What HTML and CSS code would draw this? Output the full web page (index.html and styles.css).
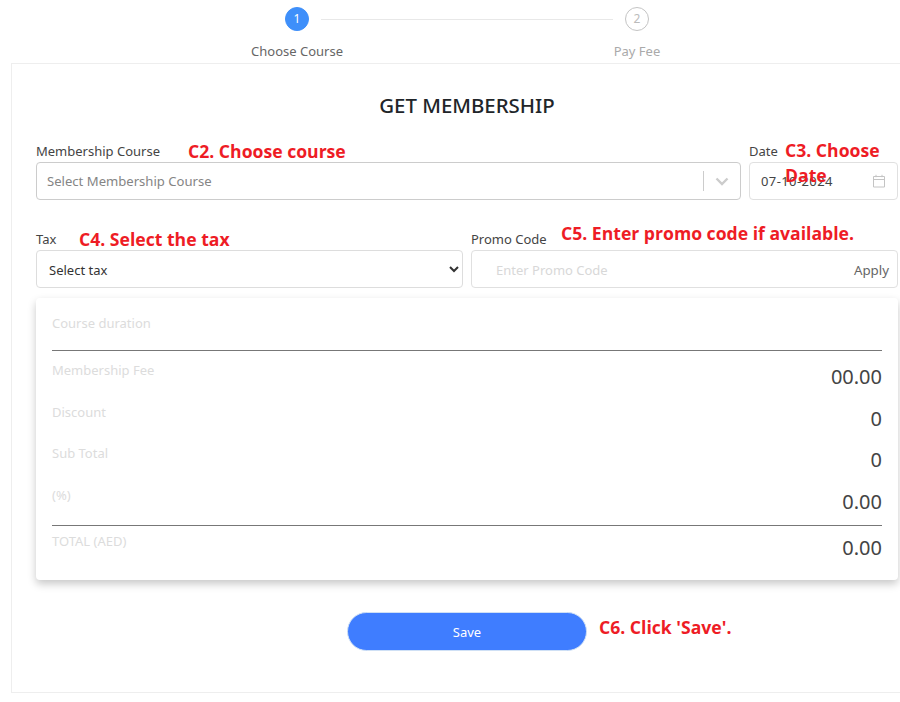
FILE: index.html
```html
<!DOCTYPE html>
<html lang="en">
<head>
<meta charset="utf-8">
<title>Get Membership</title>
<link rel="stylesheet" href="styles.css">
</head>
<body>
<div class="stepper">
  <div class="step">
    <span class="dot dot-active">1</span>
    <span class="step-label">Choose Course</span>
  </div>
  <div class="step-line"></div>
  <div class="step step-off">
    <span class="dot">2</span>
    <span class="step-label">Pay Fee</span>
  </div>
</div>
<main class="panel">
  <h1 class="title">GET MEMBERSHIP</h1>
  <div class="row row-first">
    <div class="field field-grow">
      <label class="label">Membership Course</label>
      <div class="box box-strong">
        <span class="placeholder">Select Membership Course</span>
        <span class="sep"></span>
        <svg class="chev" width="14" height="9" viewBox="0 0 14 9"><path d="M1.5 1.5 7 7l5.500-5.500" fill="none" stroke="#ccc" stroke-width="2.400"/></svg>
      </div>
    </div>
    <div class="field field-date">
      <label class="label">Date</label>
      <div class="box">
        <span class="date-val">07-10-2024</span>
        <svg class="cal" width="14" height="14" viewBox="0 0 14 14"><path d="M1.500 2.500h11v10.500h-11zM1.500 5.500h11M4 .8v2.400M10 .8v2.400" fill="none" stroke="#c4c4c4" stroke-width="1"/></svg>
      </div>
    </div>
  </div>
  <div class="row row-second">
    <div class="field field-half">
      <label class="label">Tax</label>
      <select class="select"><option>Select tax</option></select>
    </div>
    <div class="field field-half">
      <label class="label">Promo Code</label>
      <div class="box box-promo">
        <span class="promo">Enter Promo Code</span>
        <span class="apply">Apply</span>
      </div>
    </div>
  </div>
  <section class="summary">
    <div class="s-head">Course duration</div>
    <div class="s-row"><span class="s-label">Membership Fee</span><span class="s-val">00.00</span></div>
    <div class="s-row"><span class="s-label">Discount</span><span class="s-val">0</span></div>
    <div class="s-row"><span class="s-label">Sub Total</span><span class="s-val">0</span></div>
    <div class="s-row s-last"><span class="s-label">(%)</span><span class="s-val">0.00</span></div>
    <div class="s-row s-total"><span class="s-label">TOTAL (AED)</span><span class="s-val">0.00</span></div>
  </section>
  <div class="actions"><button class="save" type="button">Save</button></div>
  <span class="note n2">C2. Choose course</span>
  <span class="note n3">C3. Choose Date</span>
  <span class="note n4">C4. Select the tax</span>
  <span class="note n5">C5. Enter promo code if available.</span>
  <span class="note n6">C6. Click 'Save'.</span>
</main>
</body>
</html>
```
FILE: styles.css
```css
* { box-sizing: border-box; }
html, body { margin: 0; height: 702px; overflow: hidden; background: #fff; }
body { font-family: "Noto Sans", "Open Sans", sans-serif; color: #212529; font-size: 13px; }

.stepper { height: 63px; display: flex; align-items: flex-start; padding: 7px 0 0 227px; }
.step { width: 140px; display: flex; flex-direction: column; align-items: center; }
.dot { width: 24px; height: 24px; border-radius: 50%; border: 1px solid #c4c4c4; color: #bbb; font-size: 12px; line-height: 22px; text-align: center; }
.dot-active { background: #3e8ffa; border-color: #3e8ffa; color: #fff; }
.step-label { margin-top: 10px; font-size: 13px; line-height: 20px; color: #666; white-space: nowrap; }
.step-off .step-label { color: #aaa; }
.step-line { width: 292px; height: 1px; margin: 12px -46px 0 -46px; background: #e8e8e8; flex: none; }

.panel { position: relative; margin-left: 11px; width: 889px; height: 630px; border: 1px solid #eee; border-right: 0; padding: 0 2px 0 24px; }
.title { margin: 27px 0 0; height: 28px; font-size: 20.400px; line-height: 28px; font-weight: 500; text-align: center; color: #212529; }

.row { display: flex; gap: 8px; }
.row-first { margin-top: 21px; }
.row-second { margin-top: 28px; }
.field { display: flex; flex-direction: column; }
.field-grow { width: 705px; }
.field-date { width: 149px; }
.field-half { width: 427px; }
.label { height: 22px; font-size: 13px; line-height: 22px; color: #444; }

.box { height: 38px; border: 1px solid #e0e0e0; border-radius: 4px; display: flex; align-items: center; padding: 0 11px 0 11px; background: #fff; }
.box-strong { border-color: #ccc; padding: 0 11px 0 10px; }
.box-promo { padding-top: 1px; }
.placeholder { flex: 1; color: #858585; font-size: 13.100px; }
.sep { width: 1px; height: 20px; background: #ccc; }
.chev { margin-left: 11px; }
.date-val { flex: 1; font-size: 13px; letter-spacing: .4px; color: #444; }
.cal { flex: none; }
.promo { flex: 1; padding-left: 13px; color: #d8d8d8; font-size: 13px; }
.apply { color: #666; font-size: 13.300px; margin-right: -3px; }
.select { height: 38px; width: 100%; border: 1px solid #ddd; border-radius: 4px; background: #fff; padding: 2px 8px 0; font: 13px "Noto Sans", sans-serif; color: #333; }

.summary { margin-top: 10px; height: 282px; padding: 0 16px; border-radius: 4px; box-shadow: 0 4px 8px rgba(0,0,0,.22); background: #fff; }
.s-head { height: 53px; border-bottom: 1px solid #777; padding-top: 15px; font-size: 13px; line-height: 20px; color: #dcdcdc; }
.s-row { height: 41.500px; display: flex; justify-content: space-between; }
.s-label { margin-top: 9px; font-size: 13px; line-height: 20px; color: #dcdcdc; }
.s-val { margin-top: 12px; font-size: 20px; line-height: 28px; color: #444; }
.s-last { height: 50px; border-bottom: 1px solid #777; }
.s-total { height: 40px; }
.s-total .s-label { margin-top: 5px; }
.s-total .s-val { margin-top: 8px; }

.actions { margin-top: 32px; display: flex; justify-content: center; }
.save { width: 240px; height: 39px; border: 1px solid #cfe0f5; border-radius: 20px; background: #3f7dff; color: #fff; font: 13px "Noto Sans", sans-serif; }

.note { position: absolute; font-family: "Open Sans", sans-serif; font-weight: 700; font-size: 17.600px; line-height: 22px; color: #ee1c25; white-space: nowrap; }
.n2 { left: 176px; top: 76px; }
.n3 { left: 773px; top: 74px; width: 116px; white-space: normal; line-height: 25px; }
.n4 { left: 67px; top: 164px; }
.n5 { left: 549px; top: 158px; }
.n6 { left: 587px; top: 552px; }
```
